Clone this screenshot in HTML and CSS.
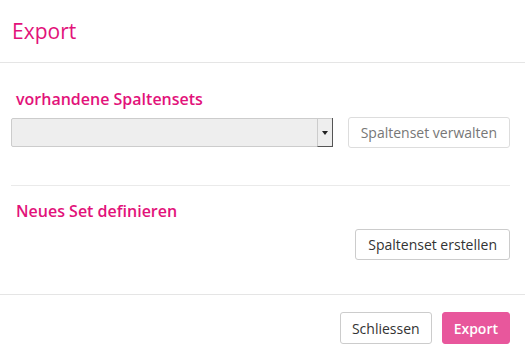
FILE: index.html
```html
<!DOCTYPE html>
<html lang="de">
<head>
    <meta charset="UTF-8">
    <title>Export</title>
    <link rel="stylesheet" href="styles.css">
</head>
<body>
    <div class="modal">
        <div class="modal-header">
            <h1>Export</h1>
        </div>

        <div class="modal-body">
            <h2>vorhandene Spaltensets</h2>
            <div class="row">
                <div class="select"><span class="arrow"></span></div>
                <button class="btn btn-muted">Spaltenset verwalten</button>
            </div>

            <hr>

            <h2>Neues Set definieren</h2>
            <div class="row row-end">
                <button class="btn">Spaltenset erstellen</button>
            </div>
        </div>

        <div class="modal-footer">
            <button class="btn">Schliessen</button>
            <button class="btn btn-primary">Export</button>
        </div>
    </div>
</body>
</html>
```

FILE: styles.css
```css
body {
    margin: 0;
    font-family: "Open Sans", "Liberation Sans", sans-serif;
    background: #fff;
    color: #333;
}
.modal {
    width: 525px;
}
.modal-header {
    height: 63px;
    padding: 0 12px;
    border-bottom: 1px solid #e5e5e5;
    box-sizing: border-box;
    display: flex;
    align-items: center;
}
h1 {
    margin: 0;
    font-size: 21px;
    font-weight: 400;
    color: #e2127a;
}
.modal-body {
    padding: 25px 15px 0 11px;
}
h2 {
    margin: 0 0 7px 5px;
    font-size: 16px;
    line-height: 22px;
    font-weight: 600;
    color: #e2127a;
}
.row {
    display: flex;
    align-items: center;
    justify-content: space-between;
}
.row-end {
    justify-content: flex-end;
}
.select {
    width: 322px;
    height: 29px;
    box-sizing: border-box;
    background: #eee;
    border: 1px solid #ccc;
    border-radius: 2px;
    position: relative;
}
.arrow {
    position: absolute;
    right: 0;
    top: 0;
    bottom: 0;
    width: 14px;
    border-left: 1px solid #ccc;
    border-right: 1px solid #555;
    border-bottom: 1px solid #555;
    margin: -1px -1px -1px 0;
}
.arrow::after {
    content: "";
    position: absolute;
    left: 4px;
    top: 13px;
    border-left: 3px solid transparent;
    border-right: 3px solid transparent;
    border-top: 4px solid #222;
}
.btn {
    font-family: "Open Sans", "Liberation Sans", sans-serif;
    font-size: 14px;
    height: 31px;
    padding: 0 12px;
    background: #fff;
    color: #333;
    border: 1px solid #ccc;
    border-radius: 3px;
}
.btn-muted {
    color: #777;
    border-color: #ddd;
}
hr {
    border: none;
    border-top: 1px solid #eaeaea;
    margin: 37px 0 14px 0;
}
.modal-footer {
    margin-top: 34px;
    border-top: 1px solid #e5e5e5;
    padding: 17px 15px 0 0;
    display: flex;
    justify-content: flex-end;
    gap: 10px;
}
.modal-footer .btn {
    height: 32px;
    padding: 0 11px;
}
.modal-footer .btn-primary {
    background: #e8579c;
    border-color: #e8579c;
    color: #fff;
    font-weight: 600;
}
```
